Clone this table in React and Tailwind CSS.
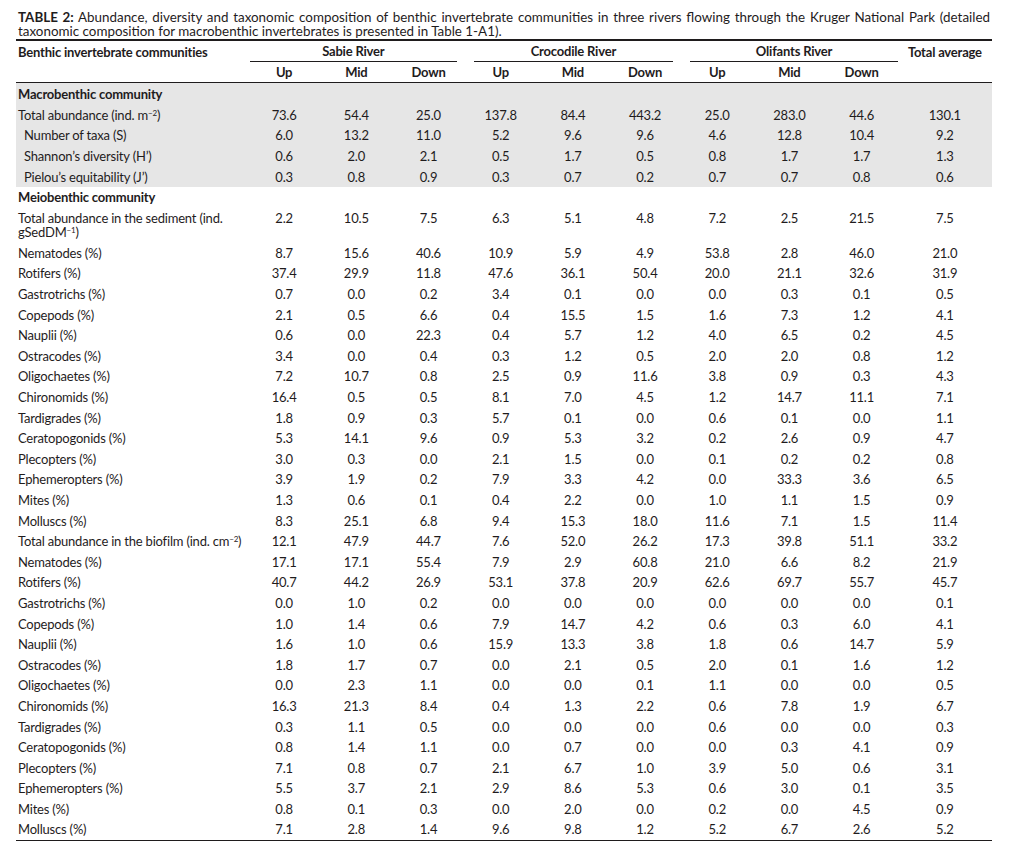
import React from "react";

const font = { fontFamily: "Lato, 'Open Sans', sans-serif" };

const macro = [
  { label: "Total abundance (ind. m", sup: "−2", tail: ")", vals: ["73.6", "54.4", "25.0", "137.8", "84.4", "443.2", "25.0", "283.0", "44.6", "130.1"] },
  { label: "Number of taxa (S)", indent: true, vals: ["6.0", "13.2", "11.0", "5.2", "9.6", "9.6", "4.6", "12.8", "10.4", "9.2"] },
  { label: "Shannon’s diversity (H’)", indent: true, vals: ["0.6", "2.0", "2.1", "0.5", "1.7", "0.5", "0.8", "1.7", "1.7", "1.3"] },
  { label: "Pielou’s equitability (J’)", indent: true, vals: ["0.3", "0.8", "0.9", "0.3", "0.7", "0.2", "0.7", "0.7", "0.8", "0.6"] },
];

const meio = [
  { label: "Nematodes (%)", vals: ["8.7", "15.6", "40.6", "10.9", "5.9", "4.9", "53.8", "2.8", "46.0", "21.0"] },
  { label: "Rotifers (%)", vals: ["37.4", "29.9", "11.8", "47.6", "36.1", "50.4", "20.0", "21.1", "32.6", "31.9"] },
  { label: "Gastrotrichs (%)", vals: ["0.7", "0.0", "0.2", "3.4", "0.1", "0.0", "0.0", "0.3", "0.1", "0.5"] },
  { label: "Copepods (%)", vals: ["2.1", "0.5", "6.6", "0.4", "15.5", "1.5", "1.6", "7.3", "1.2", "4.1"] },
  { label: "Nauplii (%)", vals: ["0.6", "0.0", "22.3", "0.4", "5.7", "1.2", "4.0", "6.5", "0.2", "4.5"] },
  { label: "Ostracodes (%)", vals: ["3.4", "0.0", "0.4", "0.3", "1.2", "0.5", "2.0", "2.0", "0.8", "1.2"] },
  { label: "Oligochaetes (%)", vals: ["7.2", "10.7", "0.8", "2.5", "0.9", "11.6", "3.8", "0.9", "0.3", "4.3"] },
  { label: "Chironomids (%)", vals: ["16.4", "0.5", "0.5", "8.1", "7.0", "4.5", "1.2", "14.7", "11.1", "7.1"] },
  { label: "Tardigrades (%)", vals: ["1.8", "0.9", "0.3", "5.7", "0.1", "0.0", "0.6", "0.1", "0.0", "1.1"] },
  { label: "Ceratopogonids (%)", vals: ["5.3", "14.1", "9.6", "0.9", "5.3", "3.2", "0.2", "2.6", "0.9", "4.7"] },
  { label: "Plecopters (%)", vals: ["3.0", "0.3", "0.0", "2.1", "1.5", "0.0", "0.1", "0.2", "0.2", "0.8"] },
  { label: "Ephemeropters (%)", vals: ["3.9", "1.9", "0.2", "7.9", "3.3", "4.2", "0.0", "33.3", "3.6", "6.5"] },
  { label: "Mites (%)", vals: ["1.3", "0.6", "0.1", "0.4", "2.2", "0.0", "1.0", "1.1", "1.5", "0.9"] },
  { label: "Molluscs (%)", vals: ["8.3", "25.1", "6.8", "9.4", "15.3", "18.0", "11.6", "7.1", "1.5", "11.4"] },
  { label: "Total abundance in the biofilm (ind. cm", sup: "−2", tail: ")", vals: ["12.1", "47.9", "44.7", "7.6", "52.0", "26.2", "17.3", "39.8", "51.1", "33.2"] },
  { label: "Nematodes (%)", vals: ["17.1", "17.1", "55.4", "7.9", "2.9", "60.8", "21.0", "6.6", "8.2", "21.9"] },
  { label: "Rotifers (%)", vals: ["40.7", "44.2", "26.9", "53.1", "37.8", "20.9", "62.6", "69.7", "55.7", "45.7"] },
  { label: "Gastrotrichs (%)", vals: ["0.0", "1.0", "0.2", "0.0", "0.0", "0.0", "0.0", "0.0", "0.0", "0.1"] },
  { label: "Copepods (%)", vals: ["1.0", "1.4", "0.6", "7.9", "14.7", "4.2", "0.6", "0.3", "6.0", "4.1"] },
  { label: "Nauplii (%)", vals: ["1.6", "1.0", "0.6", "15.9", "13.3", "3.8", "1.8", "0.6", "14.7", "5.9"] },
  { label: "Ostracodes (%)", vals: ["1.8", "1.7", "0.7", "0.0", "2.1", "0.5", "2.0", "0.1", "1.6", "1.2"] },
  { label: "Oligochaetes (%)", vals: ["0.0", "2.3", "1.1", "0.0", "0.0", "0.1", "1.1", "0.0", "0.0", "0.5"] },
  { label: "Chironomids (%)", vals: ["16.3", "21.3", "8.4", "0.4", "1.3", "2.2", "0.6", "7.8", "1.9", "6.7"] },
  { label: "Tardigrades (%)", vals: ["0.3", "1.1", "0.5", "0.0", "0.0", "0.0", "0.6", "0.0", "0.0", "0.3"] },
  { label: "Ceratopogonids (%)", vals: ["0.8", "1.4", "1.1", "0.0", "0.7", "0.0", "0.0", "0.3", "4.1", "0.9"] },
  { label: "Plecopters (%)", vals: ["7.1", "0.8", "0.7", "2.1", "6.7", "1.0", "3.9", "5.0", "0.6", "3.1"] },
  { label: "Ephemeropters (%)", vals: ["5.5", "3.7", "2.1", "2.9", "8.6", "5.3", "0.6", "3.0", "0.1", "3.5"] },
  { label: "Mites (%)", vals: ["0.8", "0.1", "0.3", "0.0", "2.0", "0.0", "0.2", "0.0", "4.5", "0.9"] },
  { label: "Molluscs (%)", vals: ["7.1", "2.8", "1.4", "9.6", "9.8", "1.2", "5.2", "6.7", "2.6", "5.2"] },
];

const Label = ({ row }) => (
  <span>
    {row.label}
    {row.sup && <sup className="text-[8px] leading-none">{row.sup}</sup>}
    {row.tail}
  </span>
);

const Row = ({ row }) => (
  <div className="flex h-[20.6px] items-center">
    <div className={`w-[232px] shrink-0 whitespace-nowrap ${row.indent ? "pl-[8px]" : "pl-[2px]"}`}>
      <Label row={row} />
    </div>
    {row.vals.slice(0, 9).map((v, i) => (
      <div key={i} className="w-[72.2px] shrink-0 text-center">
        {v}
      </div>
    ))}
    <div className="flex-1 text-center">{row.vals[9]}</div>
  </div>
);

const Sub = ({ children }) => (
  <div className="w-[72.2px] shrink-0 text-center">{children}</div>
);

export default function App() {
  return (
    <div className="bg-white w-[1019px] h-[854px] text-[#1f1c1d] text-[13px] leading-[14px] tracking-[-0.2px]" style={font}>
      <div className="pl-[16px] pr-[27px] pt-[10px]">
        <p className="px-[2px] text-[13.4px] leading-[14px] text-justify tracking-normal">
          <span className="font-bold">TABLE 2:</span> Abundance, diversity and taxonomic composition of benthic invertebrate communities in three rivers flowing through the Kruger National Park (detailed taxonomic composition for macrobenthic invertebrates is presented in Table 1-A1).
        </p>
        <div className="mt-[1px] border-t-[2.5px] border-[#1f1c1d]">
          {/* header */}
          <div className="flex h-[21px] items-center font-bold">
            <div className="w-[232px] shrink-0 pl-[2px]">Benthic invertebrate communities</div>
            <div className="w-[216.6px] shrink-0 self-stretch flex">
              <div className="ml-[2px] mr-[8px] flex-1 border-b border-[#1f1c1d] flex items-center justify-center">Sabie River</div>
            </div>
            <div className="w-[216.6px] shrink-0 self-stretch flex">
              <div className="ml-[9px] mr-[8px] flex-1 border-b border-[#1f1c1d] flex items-center justify-center">Crocodile River</div>
            </div>
            <div className="w-[216.6px] shrink-0 self-stretch flex">
              <div className="ml-[9px] mr-[0px] flex-1 border-b border-[#1f1c1d] flex items-center justify-center">Olifants River</div>
            </div>
            <div className="flex-1 text-center">Total average</div>
          </div>
          <div className="flex h-[21px] items-center font-bold border-b border-[#1f1c1d]">
            <div className="w-[232px] shrink-0" />
            <Sub>Up</Sub>
            <Sub>Mid</Sub>
            <Sub>Down</Sub>
            <Sub>Up</Sub>
            <Sub>Mid</Sub>
            <Sub>Down</Sub>
            <Sub>Up</Sub>
            <Sub>Mid</Sub>
            <Sub>Down</Sub>
            <div className="flex-1" />
          </div>
          {/* macrobenthic */}
          <div className="bg-[#e6e6e6] pt-[1px]">
            <div className="flex h-[20.6px] items-center pl-[2px] font-bold">Macrobenthic community</div>
            {macro.map((r, i) => (
              <Row key={i} row={r} />
            ))}
          </div>
          {/* meiobenthic */}
          <div className="border-b border-[#1f1c1d]">
            <div className="flex h-[20.6px] items-center pl-[2px] font-bold">Meiobenthic community</div>
            <div className="flex h-[35px] items-start pt-[3px]">
              <div className="w-[232px] shrink-0 pl-[2px]">
                Total abundance in the sediment (ind. gSedDM<sup className="text-[8px] leading-none">−1</sup>)
              </div>
              {["2.2", "10.5", "7.5", "6.3", "5.1", "4.8", "7.2", "2.5", "21.5"].map((v, i) => (
                <Sub key={i}>{v}</Sub>
              ))}
              <div className="flex-1 text-center">7.5</div>
            </div>
            {meio.map((r, i) => (
              <Row key={i} row={r} />
            ))}
          </div>
        </div>
      </div>
    </div>
  );
}
